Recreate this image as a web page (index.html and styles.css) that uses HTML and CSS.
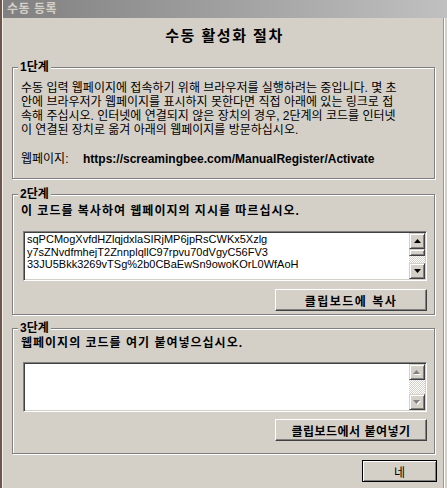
FILE: index.html
```html
<!DOCTYPE html>
<html>
<head>
    <meta charset="UTF-8">
    <link rel="stylesheet" href="styles.css">
</head>

<body>
    <div class="window">
        <div class="titlebar">수동 등록</div>

        <div class="client">
            <h1 class="heading">수동 활성화 절차</h1>

            <!-- step 1 -->
            <fieldset class="group group-one">
                <legend>1단계</legend>
                <p class="desc">
                    <span>수동 입력 웹페이지에 접속하기 위해 브라우저를 실행하려는 중입니다. 몇 초</span>
                    <span>안에 브라우저가 웹페이지를 표시하지 못한다면 직접 아래에 있는 링크로 접</span>
                    <span>속해 주십시오. 인터넷에 연결되지 않은 장치의 경우, 2단계의 코드를 인터넷</span>
                    <span>이 연결된 장치로 옮겨 아래의 웹페이지를 방문하십시오.</span>
                </p>
                <p class="site">
                    <span class="site-label">웹페이지:</span>
                    <span class="url">https://screamingbee.com/ManualRegister/Activate</span>
                </p>
            </fieldset>

            <!-- step 2 -->
            <fieldset class="group group-two">
                <legend>2단계</legend>
                <p class="note">이 코드를 복사하여 웹페이지의 지시를 따르십시오.</p>
                <div class="codebox">
                    <div class="codetext">
                        <span>sqPCMogXvfdHZlqjdxlaSIRjMP6jpRsCWKx5Xzlg</span>
                        <span>y7sZNvdfmhejT2ZnnplqllC97rpvu70dVgyC56FV3</span>
                        <span>33JU5Bkk3269vTSg%2b0CBaEwSn9owoKOrL0WfAoH</span>
                    </div>
                    <div class="scroll">
                        <div class="arrow">
                            <svg width="7" height="4" viewBox="0 0 7 4"><polygon points="3.5,0 7,4 0,4" fill="#000"/></svg>
                        </div>
                        <div class="thumb"></div>
                        <div class="track"></div>
                        <div class="arrow">
                            <svg width="7" height="4" viewBox="0 0 7 4"><polygon points="0,0 7,0 3.5,4" fill="#000"/></svg>
                        </div>
                    </div>
                </div>
                <button class="btn">클립보드에 복사</button>
            </fieldset>

            <!-- step 3 -->
            <fieldset class="group group-three">
                <legend>3단계</legend>
                <p class="note">웹페이지의 코드를 여기 붙여넣으십시오.</p>
                <div class="codebox paste">
                    <div class="codetext"></div>
                    <div class="scroll">
                        <div class="arrow">
                            <svg width="8" height="5" viewBox="0 0 8 5"><polygon points="4.5,1 8,5 1,5" fill="#fff"/><polygon points="3.5,0 7,4 0,4" fill="#808080"/></svg>
                        </div>
                        <div class="track"></div>
                        <div class="arrow">
                            <svg width="8" height="5" viewBox="0 0 8 5"><polygon points="1,1 8,1 4.5,5" fill="#fff"/><polygon points="0,0 7,0 3.5,4" fill="#808080"/></svg>
                        </div>
                    </div>
                </div>
                <button class="btn">클립보드에서 붙여넣기</button>
            </fieldset>

            <div class="footer">
                <button class="btn btn-ok">네</button>
            </div>
        </div>
    </div>
</body>
</html>
```

FILE: styles.css
```css
body {
    margin: 0;
    width: 447px;
    height: 488px;
    overflow: hidden;
    background: #6e564c;
    font-family: "Liberation Sans", "Noto Sans CJK KR", sans-serif;
    font-size: 12px;
    color: #000;
}

.window {
    margin-left: 2px;
    height: 488px;
    border-left: 1px solid #f4f2ee;
    background: #d4d0c8;
}

.titlebar {
    height: 18px;
    line-height: 18px;
    padding-left: 4px;
    background: linear-gradient(to right, #808080, #c0c0c0);
    color: #d4d0c8;
    font-weight: bold;
    letter-spacing: 0.5px;
}

.client {
    height: 470px;
    margin-right: 3px;
    border-right: 1px solid #9a9892;
    box-shadow: 1px 0 #fff;
}

.heading {
    margin: 0;
    padding: 9px 0 0 3px;
    font-size: 15px;
    line-height: 17px;
    text-align: center;
    letter-spacing: 1.5px;
}

.group {
    margin: 0 8px 0 9px;
    padding: 0 7px 12px 8px;
    min-width: 0;
    border: 1px solid #808080;
    box-shadow: inset 1px 1px #fff, 1px 1px #fff;
}

.group legend {
    margin-left: -3px;
    padding: 0 2px;
    line-height: 13px;
    font-weight: bold;
    background: #d4d0c8;
}

.group-one {
    margin-top: 17px;
}

.group-two {
    margin-top: 9px;
    padding-top: 3px;
    padding-bottom: 3px;
}

.group-three {
    margin-top: 7px;
    padding-top: 1px;
}

.desc {
    margin: 7px 0 0;
    line-height: 14px;
}

.desc span {
    display: block;
    white-space: nowrap;
}

.site {
    display: flex;
    margin: 15px 0 0;
    line-height: 14px;
}

.site-label {
    width: 62px;
}

.url {
    font-size: 12px;
    font-weight: bold;
}

.note {
    margin: 0;
    line-height: 14px;
    font-weight: bold;
    letter-spacing: 1px;
}

.codebox {
    display: flex;
    box-sizing: border-box;
    height: 50px;
    margin: 13px 0 0 2px;
    padding: 1px;
    border: 1px solid;
    border-color: #808080 #fff #fff #808080;
    box-shadow: inset 1px 1px #404040, inset -1px -1px #d4d0c8;
    background: #fff;
}

.paste {
    margin-top: 12px;
}

.codetext {
    flex: 1;
    padding: 0 2px;
    overflow: hidden;
    font-size: 11px;
    line-height: 12.5px;
    white-space: nowrap;
}

.codetext span {
    display: block;
}

.scroll {
    display: flex;
    flex-direction: column;
    width: 16px;
}

.arrow,
.thumb {
    box-sizing: border-box;
    border: 1px solid;
    border-color: #d4d0c8 #404040 #404040 #d4d0c8;
    box-shadow: inset 1px 1px #fff, inset -1px -1px #808080;
    background: #d4d0c8;
}

.arrow {
    display: flex;
    align-items: center;
    justify-content: center;
    height: 16px;
}

.thumb {
    height: 7px;
}

.track {
    flex: 1;
    background-image: repeating-conic-gradient(#fff 0 25%, #d4d0c8 0 50%);
    background-size: 2px 2px;
}

.btn {
    display: block;
    width: 152px;
    height: 22px;
    margin: 8px 0 0 auto;
    padding: 0;
    border: 1px solid;
    border-color: #fff #404040 #404040 #fff;
    box-shadow: inset -1px -1px #808080;
    background: #d4d0c8;
    color: #000;
    font-family: "Liberation Sans", "Noto Sans CJK KR", sans-serif;
    font-size: 12px;
    font-weight: bold;
    letter-spacing: 1.5px;
}

.group-three .btn {
    margin-top: 7px;
    letter-spacing: 0.5px;
}

.footer {
    display: flex;
    justify-content: flex-end;
    padding: 6px 6px 0 0;
}

.btn-ok {
    width: 75px;
    margin: 0;
    border: 1px solid #000;
    box-shadow: inset 1px 1px #fff, inset -1px -1px #808080;
    font-weight: normal;
    letter-spacing: 0;
}
```
